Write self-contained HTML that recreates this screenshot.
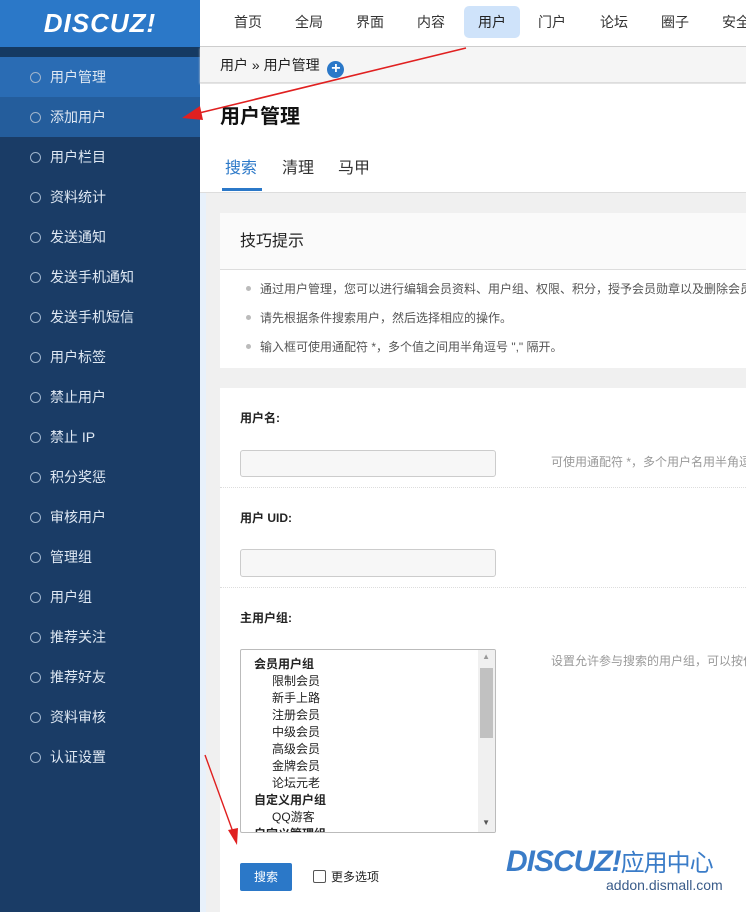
<!DOCTYPE html>
<html><head><meta charset="utf-8"><style>
*{margin:0;padding:0;box-sizing:border-box}
body{width:746px;height:912px;overflow:hidden;position:relative;background:#f0f0f0;font-family:"Liberation Sans","Noto Sans CJK SC",sans-serif;font-size:12px;color:#333}
.side{position:absolute;left:0;top:0;width:200px;height:912px;background:#1a3c66}
.logo{height:47px;background:#2b78c8;color:#fff;font:italic bold 26px "Liberation Sans",sans-serif;text-align:center;line-height:47px;letter-spacing:1px}
.band{height:10px;background:#153a62}
.it{height:40px;line-height:40px;color:#dfe8f3;font-size:14px;padding-left:50px;position:relative}
.it:before{content:"";position:absolute;left:30px;top:15px;width:9px;height:9px;border:1px solid #9fb4cc;border-radius:50%}
.a1{background:#2a6cb4}.a2{background:#245d9c}
.top{position:absolute;left:200px;top:0;right:0;height:47px;background:#fff;border-bottom:1px solid #ccc}
.nav{position:absolute;top:6px;height:32px;line-height:32px;width:56px;text-align:center;font-size:14px;color:#333}
.nav.on{background:#cfe3fa;border-radius:5px;color:#222}
.bc{position:absolute;left:200px;top:47px;right:0;height:36px;background:#f5f5f5;border-bottom:1px solid #ddd;box-shadow:0 1px 2px #ddd;font-size:14px;line-height:36px;padding-left:20px;color:#222}
.plus{display:inline-block;width:17px;height:17px;border-radius:50%;background:#2b78c8;color:#fff;text-align:center;line-height:16px;font-weight:bold;font-size:16px;vertical-align:-3px;margin-left:4px}
.head{position:absolute;left:200px;top:84px;right:0;height:109px;background:#fff;border-bottom:1px solid #ddd}
.strip{position:absolute;left:200px;top:193px;width:6px;bottom:0;background:#e8f1fb}
.box{position:absolute;left:220px;right:0;background:#fff;overflow:hidden}
.red{position:absolute;left:0;top:0}
.tip{white-space:nowrap;padding-left:26px;height:29px;line-height:29px}
.tip i{display:inline-block;width:5px;height:5px;border-radius:50%;background:#bbb;vertical-align:2px;margin-right:9px}
.nw{white-space:nowrap}
</style></head><body>
<div class="side">
<div class="logo">DISCUZ!</div>
<div class="band"></div>
<div class="it a1">用户管理</div><div class="it a2">添加用户</div>
<div class="it">用户栏目</div><div class="it">资料统计</div><div class="it">发送通知</div><div class="it">发送手机通知</div><div class="it">发送手机短信</div><div class="it">用户标签</div><div class="it">禁止用户</div><div class="it">禁止 IP</div><div class="it">积分奖惩</div><div class="it">审核用户</div><div class="it">管理组</div><div class="it">用户组</div><div class="it">推荐关注</div><div class="it">推荐好友</div><div class="it">资料审核</div><div class="it">认证设置</div>
</div>
<div class="top">
<div class="nav" style="left:20px">首页</div><div class="nav" style="left:81px">全局</div><div class="nav" style="left:142px">界面</div><div class="nav" style="left:203px">内容</div><div class="nav on" style="left:264px">用户</div><div class="nav" style="left:324px">门户</div><div class="nav" style="left:386px">论坛</div><div class="nav" style="left:447px">圈子</div><div class="nav" style="left:508px">安全</div>
</div>
<div class="bc">用户 » 用户管理 <span class="plus">+</span></div>
<div class="head">
<div style="position:absolute;left:20px;top:16px;font-size:20px;font-weight:bold;color:#111">用户管理</div>
<div style="position:absolute;left:25px;top:70px;font-size:16px;color:#2b78c8">搜索</div>
<div style="position:absolute;left:22px;top:104px;width:40px;height:3px;background:#2b78c8"></div>
<div style="position:absolute;left:82px;top:70px;font-size:16px;color:#333">清理</div>
<div style="position:absolute;left:138px;top:70px;font-size:16px;color:#333">马甲</div>
</div>
<div class="strip"></div>
<div class="box" style="top:213px;height:155px">
<div style="height:57px;background:#fafafa;border-bottom:1px solid #ddd;font-size:16px;line-height:57px;padding-left:20px;color:#222">技巧提示</div>
<div style="color:#555;padding-top:5px">
<div class="tip"><i></i>通过用户管理，您可以进行编辑会员资料、用户组、权限、积分，授予会员勋章以及删除会员</div>
<div class="tip"><i></i>请先根据条件搜索用户，然后选择相应的操作。</div>
<div class="tip"><i></i>输入框可使用通配符 *，多个值之间用半角逗号 "," 隔开。</div>
</div></div>
<div class="box" style="top:388px;height:524px">
<div style="position:absolute;left:20px;top:21px;font-weight:bold;color:#222">用户名:</div>
<div style="position:absolute;left:20px;top:62px;width:256px;height:27px;background:#f7f7f7;border:1px solid #ccc;border-radius:3px"></div>
<div class="nw" style="position:absolute;left:331px;top:65px;color:#999">可使用通配符 *，多个用户名用半角逗号</div>
<div style="position:absolute;left:0;right:0;top:99px;border-top:1px dotted #ddd"></div>
<div style="position:absolute;left:20px;top:121px;font-weight:bold;color:#222">用户 UID:</div>
<div style="position:absolute;left:20px;top:161px;width:256px;height:28px;background:#f7f7f7;border:1px solid #ccc;border-radius:3px"></div>
<div style="position:absolute;left:0;right:0;top:199px;border-top:1px dotted #ddd"></div>
<div style="position:absolute;left:20px;top:221px;font-weight:bold;color:#222">主用户组:</div>
<div class="nw" style="position:absolute;left:331px;top:264px;color:#999">设置允许参与搜索的用户组，可以按住</div>
<div style="position:absolute;left:20px;top:261px;width:256px;height:184px;border:1px solid #bbb;border-radius:2px;overflow:hidden;line-height:17px;padding:6px 0 0 13px;color:#222">
<div style="font-weight:bold">会员用户组</div>
<div style="padding-left:18px">限制会员<br>新手上路<br>注册会员<br>中级会员<br>高级会员<br>金牌会员<br>论坛元老</div>
<div style="font-weight:bold">自定义用户组</div>
<div style="padding-left:18px">QQ游客</div>
<div style="font-weight:bold">自定义管理组</div>
<div style="position:absolute;right:0;top:0;width:17px;height:184px;background:#f0f0f0"></div>
<div style="position:absolute;right:2px;top:18px;width:13px;height:70px;background:#c1c1c1"></div>
<div style="position:absolute;right:5px;top:3px;font-size:8px;color:#999;line-height:8px">▲</div>
<div style="position:absolute;right:5px;bottom:5px;font-size:8px;color:#555;line-height:8px">▼</div>
</div>
<div style="position:absolute;left:20px;top:475px;width:52px;height:28px;background:#2b78c8;border-radius:2px;color:#fff;text-align:center;line-height:28px">搜索</div>
<div style="position:absolute;left:93px;top:482px;width:13px;height:13px;border:1px solid #555;border-radius:2px"></div>
<div style="position:absolute;left:111px;top:480px;color:#222">更多选项</div>
<div class="nw" style="position:absolute;left:286px;top:455px;font:italic bold 30px 'Liberation Sans',sans-serif;color:#3a7cc8;letter-spacing:-1px">DISCUZ!<span style="font:normal 24px 'Noto Sans CJK SC',sans-serif">应用中心</span></div>
<div class="nw" style="position:absolute;left:386px;top:489px;font-size:14px;color:#3a5c8a">addon.dismall.com</div>
</div>
<svg class="red" width="746" height="912">
<line x1="466" y1="48" x2="195" y2="114" stroke="#e02020" stroke-width="1.6"/>
<polygon points="182,118 200,106 203,120" fill="#e02020"/>
<line x1="205" y1="755" x2="233" y2="832" stroke="#e02020" stroke-width="1.4"/>
<polygon points="237,845 228,830 238,828" fill="#e02020"/>
</svg>
</body></html>
